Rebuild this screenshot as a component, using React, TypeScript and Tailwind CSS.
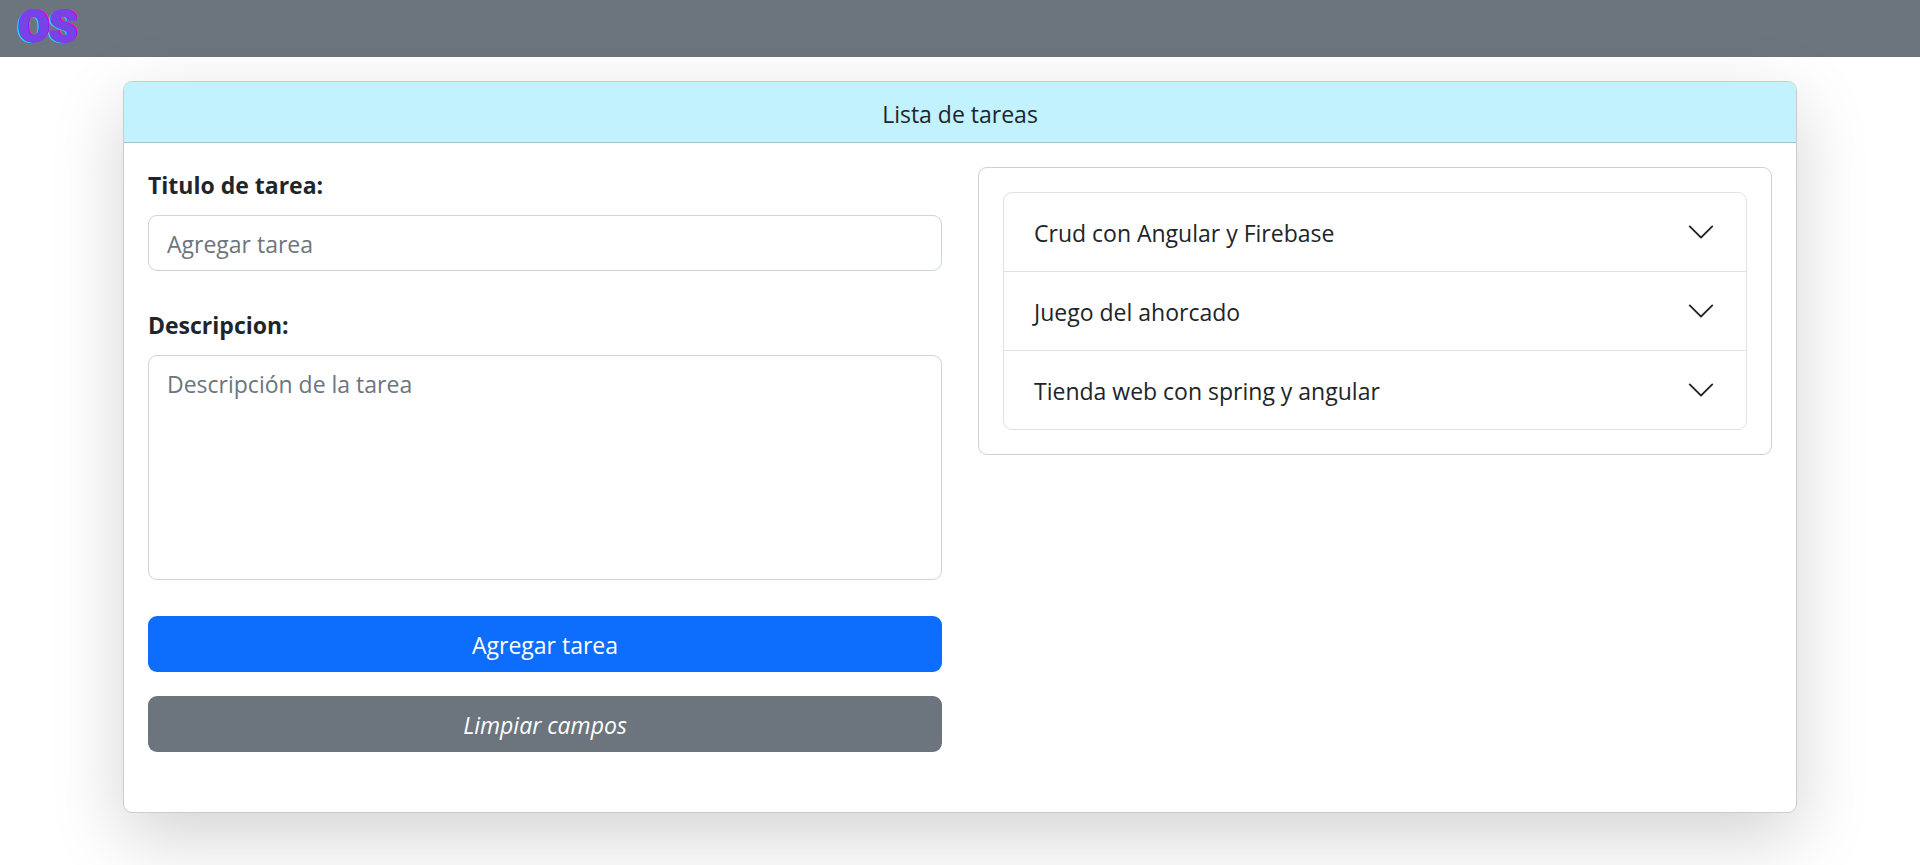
import { useState } from "react";

const tasks = [
  "Crud con Angular y Firebase",
  "Juego del ahorcado",
  "Tienda web con spring y angular",
];

function Chevron() {
  return (
    <svg viewBox="0 0 16 16" className="size-[30px] shrink-0" fill="#212529" aria-hidden="true">
      <path
        fillRule="evenodd"
        d="M1.646 4.646a.5.5 0 0 1 .708 0L8 10.293l5.646-5.647a.5.5 0 0 1 .708.708l-6 6a.5.5 0 0 1-.708 0l-6-6a.5.5 0 0 1 0-.708z"
      />
    </svg>
  );
}

function Navbar() {
  return (
    <nav className="flex h-[57px] items-center bg-[#6c757d] px-[18px] pb-1">
      <a
        href="#"
        className="font-[Roboto,sans-serif] text-[45px] leading-none font-black text-[#7b41e8] [-webkit-text-stroke:2px_#7b41e8] [text-shadow:-2px_1px_0_#12dff5,2px_-1px_0_#f000f0]"
      >
        OS
      </a>
    </nav>
  );
}

function TaskForm() {
  const [title, setTitle] = useState("");
  const [description, setDescription] = useState("");
  const clear = () => {
    setTitle("");
    setDescription("");
  };

  return (
    <form className="flex flex-col pb-9" onSubmit={(e) => e.preventDefault()}>
      <label htmlFor="title" className="mb-3 font-bold">
        Titulo de tarea:
      </label>
      <input
        id="title"
        type="text"
        placeholder="Agregar tarea"
        value={title}
        onChange={(e) => setTitle(e.target.value)}
        className="mb-9 h-14 w-full rounded-[9px] border border-[#ced4da] bg-white px-[18px] pt-0.5 placeholder:text-[#6c757d]"
      />
      <label htmlFor="description" className="mb-3 font-bold">
        Descripcion:
      </label>
      <textarea
        id="description"
        placeholder="Descripción de la tarea"
        value={description}
        onChange={(e) => setDescription(e.target.value)}
        className="mb-9 h-[225px] w-full resize-none rounded-[9px] border border-[#ced4da] bg-white px-[18px] py-2.5 placeholder:text-[#6c757d]"
      />
      <button type="submit" className="mb-6 h-14 rounded-[9px] bg-[#0d6efd] pt-0.5 text-white">
        Agregar tarea
      </button>
      <button type="button" onClick={clear} className="h-14 rounded-[9px] bg-[#6c757d] pt-0.5 text-white italic">
        Limpiar campos
      </button>
    </form>
  );
}

function TaskList() {
  return (
    <section className="self-start rounded-[9px] border border-[#d0d1d3] p-6">
      <ul className="divide-y divide-[#dee2e6] rounded-[9px] border border-[#dee2e6]">
        {tasks.map((task) => (
          <li key={task}>
            <button type="button" className="flex h-[78px] w-full items-center justify-between px-[30px] text-left">
              <span className="pt-0.5">{task}</span>
              <Chevron />
            </button>
          </li>
        ))}
      </ul>
    </section>
  );
}

export default function App() {
  return (
    <div className="min-h-screen overflow-hidden bg-white font-['Open_Sans',sans-serif] text-[23px] leading-9 text-[#212529]">
      <Navbar />
      <main className="mx-auto mt-6 w-full max-w-[1674px]">
        <div className="rounded-[9px] border border-[#c9cbcc] bg-white shadow-[0_24px_72px_rgba(0,0,0,0.175)]">
          <h1 className="rounded-t-lg border-b border-[#9bc4ce] bg-[#c2f2fe] pt-3.5 pb-2.5 text-center">
            Lista de tareas
          </h1>
          <div className="grid grid-cols-2 gap-9 p-6">
            <TaskForm />
            <TaskList />
          </div>
        </div>
      </main>
    </div>
  );
}
